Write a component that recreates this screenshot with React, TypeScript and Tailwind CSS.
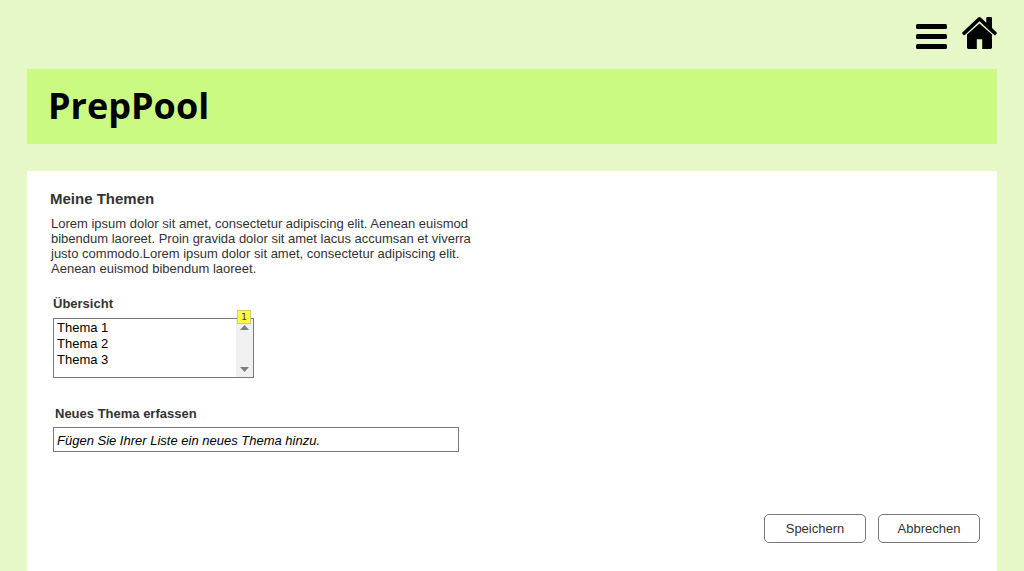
import React from "react";

const themen = ["Thema 1", "Thema 2", "Thema 3"];

function MenuIcon() {
  return (
    <svg width="31" height="25" viewBox="0 0 31 25" fill="currentColor" aria-hidden="true">
      <rect width="31" height="5" rx="1.5" />
      <rect y="10" width="31" height="5" rx="1.5" />
      <rect y="20" width="31" height="5" rx="1.5" />
    </svg>
  );
}

function HomeIcon() {
  return (
    <svg width="35" height="33" viewBox="0 0 35 33" aria-hidden="true">
      <path
        d="M17.5 6.4 L30 17.6 V30.6 Q30 32 28.6 32 H20.2 V22.3 H14.8 V32 H6.4 Q5 32 5 30.6 V17.6 Z"
        fill="currentColor"
      />
      <path
        d="M16.2 .6 Q17.5 -.4 18.8 .6 L24.3 5.8 V.8 Q24.3 0 25.1 0 H29.2 Q30 0 30 .8 V11.1 L34.5 15.3 Q35.2 16 34.6 16.7 L33.5 17.9 Q32.8 18.5 32.1 17.9 L17.5 4.2 L2.9 17.9 Q2.2 18.5 1.5 17.9 L.4 16.7 Q-.2 16 .5 15.3 Z"
        fill="currentColor"
      />
    </svg>
  );
}

function ScrollArrow({ up }: { up?: boolean }) {
  return (
    <svg width="9" height="5" viewBox="0 0 9 5" fill="#7d7d7d">
      <path d={up ? "M0 5 L4.5 0 L9 5 Z" : "M0 0 H9 L4.5 5 Z"} />
    </svg>
  );
}

function ThemenListe() {
  return (
    <div className="relative ml-[3px] mt-1.5 h-[60px] w-[201px] border border-[#797979] bg-white">
      <select
        id="uebersicht"
        size={3}
        className="block h-full w-full overflow-hidden bg-transparent py-px pl-[3px] pr-5 font-[inherit] text-[13px] text-black outline-none"
      >
        {themen.map((thema) => (
          <option key={thema} className="h-4 p-0 leading-4">
            {thema}
          </option>
        ))}
      </select>
      <div
        aria-hidden="true"
        className="pointer-events-none absolute inset-y-0 right-0 flex w-[17px] flex-col items-center justify-between bg-[#f0f0f0] pb-[5px] pt-1.5"
      >
        <ScrollArrow up />
        <ScrollArrow />
      </div>
      <span className="absolute -top-[9px] right-[2px] flex h-[14px] w-[14px] items-center justify-center border border-[#d8cf62] bg-[#fff845] font-['DejaVu_Sans',sans-serif] text-[9px] leading-none text-[#333333]">
        1
      </span>
    </div>
  );
}

function Button({ children }: { children: React.ReactNode }) {
  return (
    <button
      type="button"
      className="h-[29px] w-[102px] rounded-[5px] border border-[#797979] bg-white text-[13px] text-[#333333]"
    >
      {children}
    </button>
  );
}

export default function App() {
  return (
    <div className="flex min-h-screen flex-col bg-[#e6f8c8] px-[27px] font-['Liberation_Sans',Arial,sans-serif] text-[13px] text-[#333333]">
      <nav className="flex justify-end gap-[15px] pb-[19px] pt-[17px] text-black">
        <button type="button" aria-label="Menü" className="pt-1.5">
          <MenuIcon />
        </button>
        <a href="#" aria-label="Startseite">
          <HomeIcon />
        </a>
      </nav>
      <header className="flex h-[75px] shrink-0 items-center bg-[#cbfa82] px-[21px] pb-0.5">
        <h1 className="font-['Open_Sans',sans-serif] text-[36px] font-bold leading-none text-black">
          PrepPool
        </h1>
      </header>
      <main className="mt-[27px] flex-1 bg-white pb-7 pl-[23px] pr-[17px] pt-5">
        <h2 className="text-[15px] font-bold leading-4">Meine Themen</h2>
        <p className="ml-px mt-[9px] max-w-[430px] leading-[15px]">
          Lorem ipsum dolor sit amet, consectetur adipiscing elit. Aenean euismod bibendum laoreet.
          Proin gravida dolor sit amet lacus accumsan et viverra justo commodo.Lorem ipsum dolor sit
          amet, consectetur adipiscing elit. Aenean euismod bibendum laoreet.
        </p>
        <label htmlFor="uebersicht" className="ml-[3px] mt-5 block font-bold leading-4">
          Übersicht
        </label>
        <ThemenListe />
        <label htmlFor="neues-thema" className="ml-[5px] mt-7 block font-bold leading-4">
          Neues Thema erfassen
        </label>
        <input
          id="neues-thema"
          type="text"
          placeholder="Fügen Sie Ihrer Liste ein neues Thema hinzu."
          className="ml-[3px] mt-[5px] block h-[25px] w-[406px] border border-[#797979] bg-white px-[3px] pt-0.5 italic text-black placeholder:text-black placeholder:opacity-100"
        />
        <div className="mt-[62px] flex justify-end gap-3">
          <Button>Speichern</Button>
          <Button>Abbrechen</Button>
        </div>
      </main>
    </div>
  );
}
